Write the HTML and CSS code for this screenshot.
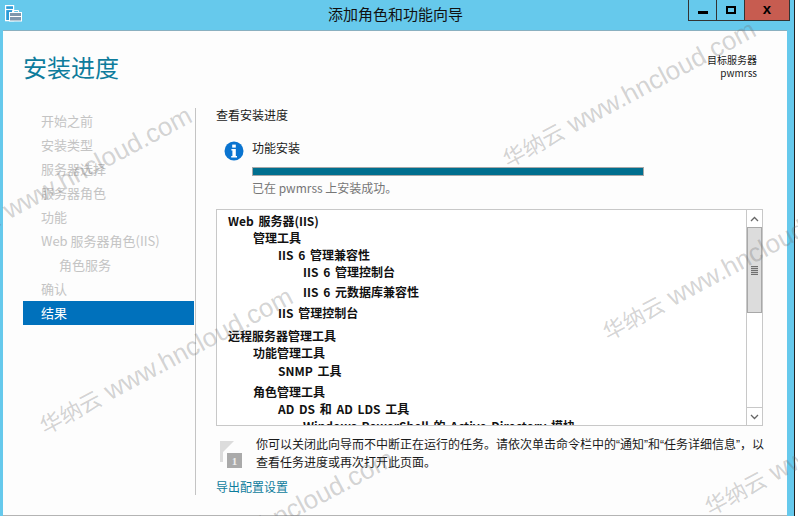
FILE: index.html
```html
<!DOCTYPE html>
<html lang="zh-CN">
<head>
  <meta charset="UTF-8" />
  <title>添加角色和功能向导</title>
  <link rel="stylesheet" href="styles.css">
</head>
<body>
  <div class="window">
    <!-- Title bar -->
    <div class="titlebar">
      <svg class="app-icon" width="17" height="17" viewBox="0 0 17 17">
        <path d="M.6.6h8v15h-8z" fill="#2b9bd8" stroke="#fff" stroke-width="1.2"/>
        <path d="M1 4.5h7" stroke="#fff" stroke-width="1.2"/>
        <rect x="4.5" y="7.5" width="12" height="8.5" fill="#7f97ad" stroke="#fff"/>
        <path d="M7.5 7.5V5.5h6v2" fill="none" stroke="#fff"/>
        <path d="M5 11.5h11" stroke="#fff"/>
      </svg>
      <span class="title">添加角色和功能向导</span>
      <div class="controls">
        <div class="ctl"><span class="ctl-min"></span></div>
        <div class="ctl"><span class="ctl-max"></span></div>
        <div class="ctl ctl-close">x</div>
      </div>
    </div>

    <div class="client">
      <div class="head">
        <h1>安装进度</h1>
        <div class="target">
          <div>目标服务器</div>
          <div>pwmrss</div>
        </div>
      </div>

      <div class="body">
        <!-- Steps -->
        <ul class="steps">
          <li>开始之前</li>
          <li>安装类型</li>
          <li>服务器选择</li>
          <li>服务器角色</li>
          <li>功能</li>
          <li>Web 服务器角色(IIS)</li>
          <li class="sub">角色服务</li>
          <li>确认</li>
          <li class="active">结果</li>
        </ul>

        <div class="main">
          <div class="intro">查看安装进度</div>

          <div class="status">
            <svg class="info" width="20" height="20" viewBox="0 0 20 20">
              <circle cx="10" cy="10" r="9.5" fill="#0a74d0"/>
              <rect x="8.2" y="3.6" width="3.6" height="3" fill="#fff"/>
              <path d="M7.4 8h4.4v7h1.2v1.6H7.2V15h1.2V9.6h-1z" fill="#fff"/>
            </svg>
            <div class="status-text">
              <div class="status-title">功能安装</div>
              <div class="bar"></div>
              <div class="status-msg">已在 pwmrss 上安装成功。</div>
            </div>
          </div>

          <div class="listbox">
            <div class="tree">
              <div class="r0">Web 服务器(IIS)</div>
              <div class="r1">管理工具</div>
              <div class="r2">IIS 6 管理兼容性</div>
              <div class="r3">IIS 6 管理控制台</div>
              <div class="r3 gap3">IIS 6 元数据库兼容性</div>
              <div class="r2 gap4">IIS 管理控制台</div>
              <div class="r0 gap6">远程服务器管理工具</div>
              <div class="r1">功能管理工具</div>
              <div class="r2 gap1">SNMP 工具</div>
              <div class="r1 gap4">角色管理工具</div>
              <div class="r2">AD DS 和 AD LDS 工具</div>
              <div class="r3">Windows PowerShell 的 Active Directory 模块</div>
            </div>
            <div class="scrollbar">
              <div class="arrow">
                <svg width="9" height="6" viewBox="0 0 9 6"><path d="M1 5l3.5-3.5L8 5" fill="none" stroke="#666" stroke-width="1.3"/></svg>
              </div>
              <div class="thumb"><span class="grip"></span></div>
              <div class="track"></div>
              <div class="arrow">
                <svg width="9" height="6" viewBox="0 0 9 6"><path d="M1 1l3.5 3.5L8 1" fill="none" stroke="#666" stroke-width="1.3"/></svg>
              </div>
            </div>
          </div>

          <div class="note">
            <svg class="flag" width="24" height="28" viewBox="0 0 24 28">
              <path d="M0 0h14L3 11v10H0z" fill="#dcdcdc"/>
              <rect x="7" y="12" width="15" height="15" fill="#aaa"/>
              <text x="14.5" y="24" text-anchor="middle" class="flag-num">1</text>
            </svg>
            <p>你可以关闭此向导而不中断正在运行的任务。请依次单击命令栏中的“通知”和“任务详细信息”，以<br>查看任务进度或再次打开此页面。</p>
          </div>

          <div class="export">导出配置设置</div>
        </div>
      </div>
    </div>
  </div>

  <!-- Watermarks -->
  <div class="wm wm1"><span class="wm-cn">华纳云</span> www.hncloud.com</div>
  <div class="wm wm2"><span class="wm-cn">华纳云</span> www.hncloud.com</div>
  <div class="wm wm3"><span class="wm-cn">华纳云</span> www.hncloud.com</div>
  <div class="wm wm4"><span class="wm-cn">华纳云</span> www.hncloud.com</div>
  <div class="wm wm5"><span class="wm-cn">华纳云</span> www.hncloud.com</div>
  <div class="wm wm6"><span class="wm-cn">华纳云</span> www.hncloud.com</div>
</body>
</html>
```

FILE: styles.css
```css
html, body {
  margin: 0;
  padding: 0;
  width: 798px;
  height: 516px;
  overflow: hidden;
  background: #fff;
}
body {
  position: relative;
  font-family: "Noto Sans CJK SC", "Liberation Sans", sans-serif;
  font-size: 12px;
  color: #1a1a1a;
}
.window {
  width: 794px;
  height: 516px;
  background: #66c9ec;
  border-right: 1px solid #222;
  display: flex;
  flex-direction: column;
}
.titlebar {
  height: 30px;
  flex: none;
  display: flex;
  align-items: center;
  position: relative;
  justify-content: center;
  padding: 0 3px 3px 0;
  box-sizing: border-box;
}
.app-icon {
  position: absolute;
  left: 5px;
  top: 5px;
}
.title {
  font-size: 15px;
  color: #111;
}
.controls {
  position: absolute;
  left: 688px;
  top: 0;
  display: flex;
  height: 20px;
  border: 1px solid #333;
  border-top: none;
  border-right: none;
}
.ctl {
  width: 27px;
  display: flex;
  align-items: center;
  justify-content: center;
  border-right: 1px solid #333;
}
.ctl-close {
  width: 45px;
  background: #c75c50;
  font: bold 15px "Liberation Sans", sans-serif;
  color: #000;
  padding-bottom: 3px;
  box-sizing: border-box;
}
.ctl-min {
  width: 10px;
  height: 3px;
  background: #000;
  margin-top: 5px;
}
.ctl-max {
  width: 6px;
  height: 4px;
  border: 2px solid #000;
}
.client {
  flex: 1;
  margin: 0 7px 0 3px;
  background: #fdfdfd;
  border-top: 1px solid #8ab0c0;
  border-bottom: 1px solid #b4b4b4;
  padding: 0 30px 0 20px;
  display: flex;
  flex-direction: column;
  min-height: 0;
}
.head {
  display: flex;
  justify-content: space-between;
  align-items: flex-start;
  height: 77px;
  flex: none;
}
.head h1 {
  margin: 18px 0 0;
  font-size: 24px;
  font-weight: 400;
  color: #0e7c9c;
  line-height: 36px;
}
.target {
  margin-top: 22px;
  text-align: right;
  font-size: 10px;
  line-height: 13px;
}
.body {
  display: flex;
  flex: 1;
  min-height: 0;
}
.steps {
  list-style: none;
  margin: 0;
  padding: 1px 0 0;
  width: 171px;
  flex: none;
  color: #c4c4c4;
  font-size: 13px;
}
.steps li {
  height: 24px;
  line-height: 24px;
  padding-left: 18px;
}
.steps li.sub {
  padding-left: 36px;
}
.steps li.active {
  background: #0071bc;
  color: #fff;
}
.main {
  margin-left: 1px;
  border-left: 1px solid #c4c4c4;
  padding-left: 20px;
  width: 547px;
  height: 387px;
  flex: none;
}
.intro {
  height: 14px;
  line-height: 14px;
  margin-bottom: 17px;
}
.status {
  display: flex;
  padding-left: 8px;
  height: 70px;
}
.info {
  margin-top: 2px;
}
.status-text {
  margin-left: 8px;
  flex: 1;
}
.status-title {
  line-height: 18px;
  margin-bottom: 10px;
}
.bar {
  width: 390px;
  height: 7px;
  border: 1px solid #a8a8a8;
  background: #006f8f;
}
.status-msg {
  margin-top: 3px;
  line-height: 18px;
  color: #777;
}
.listbox {
  width: 547px;
  height: 217px;
  box-sizing: border-box;
  border: 1px solid #c8c8c8;
  background: #fff;
  display: flex;
  overflow: hidden;
}
.tree {
  flex: 1;
  padding: 2px 0 0 11px;
  font-weight: 700;
  color: #111;
  white-space: nowrap;
  overflow: hidden;
  word-spacing: 2px;
}
.tree div {
  line-height: 17px;
}
.tree .gap1 { margin-top: 1px; }
.tree .gap3 { margin-top: 3px; }
.tree .gap4 { margin-top: 4px; }
.tree .gap6 { margin-top: 6px; }
.tree .r1 { padding-left: 25px; }
.tree .r2 { padding-left: 50px; }
.tree .r3 { padding-left: 75px; }
.scrollbar {
  width: 16px;
  flex: none;
  display: flex;
  flex-direction: column;
  border-left: 1px solid #c8c8c8;
  box-sizing: border-box;
}
.arrow {
  height: 17px;
  display: flex;
  align-items: center;
  justify-content: center;
  flex: none;
}
.thumb {
  height: 86px;
  box-sizing: border-box;
  background: #dcdcdc;
  border: 1px solid #a8a8a8;
  display: flex;
  align-items: center;
  justify-content: center;
  flex: none;
}
.grip {
  width: 7px;
  height: 9px;
  background: repeating-linear-gradient(#707070 0 1px, #c8c8c8 1px 2px);
}
.track {
  flex: 1;
  border-bottom: 1px solid #c8c8c8;
}
.note {
  display: flex;
  margin-top: 9px;
  height: 36px;
  padding-left: 2px;
}
.flag {
  flex: none;
  margin: 6px 0 0 2px;
}
.flag-num {
  font: bold 11px "Liberation Serif", serif;
  fill: #eee;
}
.note p {
  margin: 1px 0 0 12px;
  width: 515px;
  line-height: 18px;
  white-space: nowrap;
  font-family: "Liberation Sans", "Noto Sans CJK SC", sans-serif;
}
.export {
  margin-top: 7px;
  color: #0e7c9c;
  line-height: 18px;
}
.wm {
  position: absolute;
  font-family: "Liberation Sans", "Noto Sans CJK SC", sans-serif;
  font-size: 26px;
  color: rgba(110, 110, 110, 0.3);
  white-space: nowrap;
  transform-origin: 0 100%;
  transform: rotate(-28deg);
  line-height: 30px;
  pointer-events: none;
}
.wm-cn {
  font-size: 22px;
}
.wm1 { left: -52px; top: 229px; }
.wm2 { left: 512px; top: 143px; }
.wm3 { left: 49px; top: 410px; }
.wm4 { left: 612px; top: 316px; }
.wm5 { left: 714px; top: 491px; }
.wm6 { left: 150px; top: 572px; }
```
